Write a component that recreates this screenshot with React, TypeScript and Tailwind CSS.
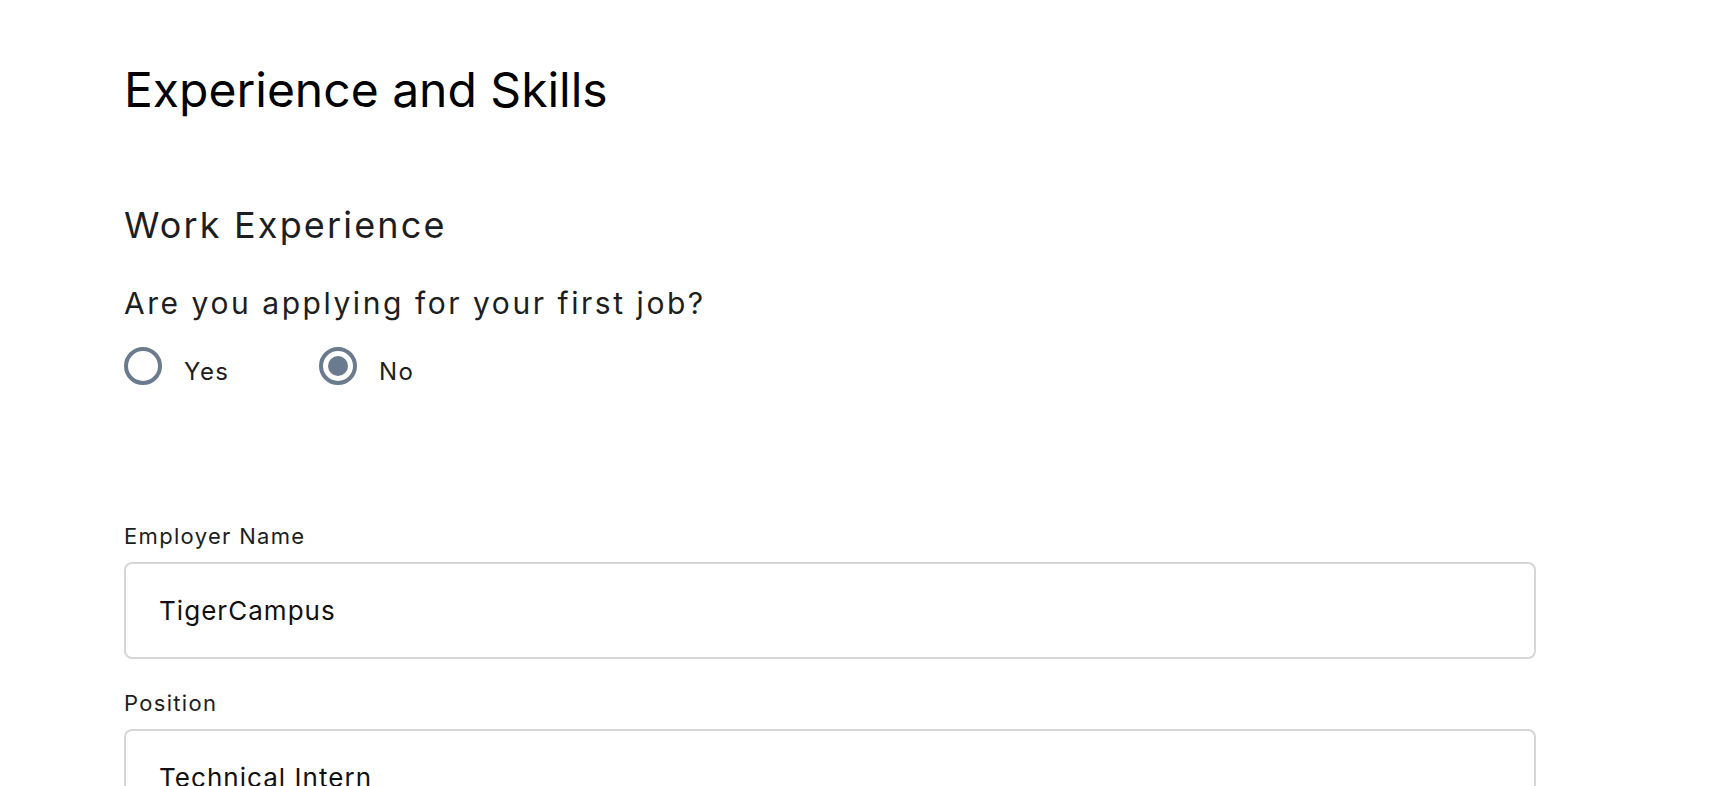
import React, { useState } from "react";

const font = { fontFamily: "Inter, 'Noto Sans', sans-serif" };

const Radio: React.FC<{ label: string; checked: boolean; onSelect: () => void; className?: string }> = ({
  label,
  checked,
  onSelect,
  className,
}) => (
  <button type="button" onClick={onSelect} className={`flex items-start gap-[22px] ${className ?? ""}`}>
    <span className="flex h-[38px] w-[38px] items-center justify-center rounded-full border-4 border-[#6b7b8e]">
      {checked && <span className="h-[20px] w-[20px] rounded-full bg-[#6b7b8e]" />}
    </span>
    <span className="mt-[13px] text-[24px] leading-none tracking-[0.06em] text-[#1c1e21]">{label}</span>
  </button>
);

const Field: React.FC<{ label: string; value: string; className?: string }> = ({ label, value, className }) => (
  <label className={`flex flex-col ${className ?? ""}`}>
    <span className="text-[22px] leading-none tracking-[0.06em] text-[#1c1e21]">{label}</span>
    <input
      defaultValue={value}
      className="mt-[15px] h-[97px] w-[1412px] rounded-[8px] border-2 border-[#d6d6d6] pl-[33px] text-[26px] tracking-[0.04em] text-[#111] outline-none"
    />
  </label>
);

export default function App() {
  const [firstJob, setFirstJob] = useState(false);

  return (
    <div className="min-h-screen bg-white pl-[124px] pt-[66px]" style={font}>
      <h1 className="text-[48px] leading-none text-black">Experience and Skills</h1>

      <h2 className="mt-[93px] text-[36px] leading-none tracking-[0.06em] text-[#1c1e21]">Work Experience</h2>

      <p className="mt-[45px] text-[30px] leading-none tracking-[0.085em] text-[#1c1e21]">
        Are you applying for your first job?
      </p>

      <div className="mt-[29px] flex">
        <Radio label="Yes" checked={firstJob} onSelect={() => setFirstJob(true)} className="w-[195px]" />
        <Radio label="No" checked={!firstJob} onSelect={() => setFirstJob(false)} />
      </div>

      <Field label="Employer Name" value="TigerCampus" className="mt-[140px]" />
      <Field label="Position" value="Technical Intern" className="mt-[33px]" />
    </div>
  );
}
